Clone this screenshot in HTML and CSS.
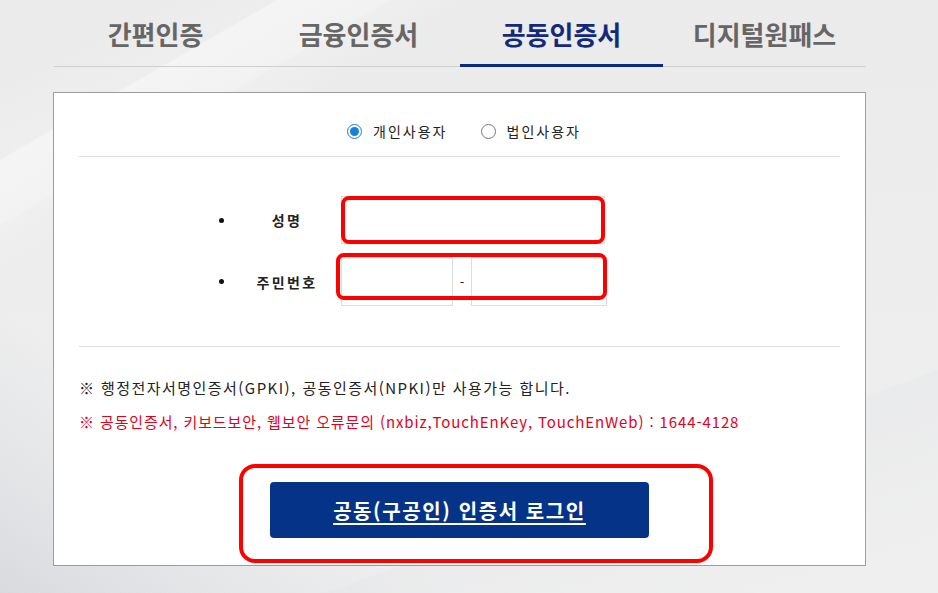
FILE: index.html
```html
<!DOCTYPE html>
<html lang="ko">
<head>
    <meta charset="UTF-8">
    <meta name="viewport" content="width=device-width, initial-scale=1.0">
    <title>공동인증서 로그인</title>
    <link rel="stylesheet" href="styles.css">
</head>
<body>
    <div class="login-wrap">
        <ul class="login-tabs">
            <li class="tab">간편인증</li>
            <li class="tab">금융인증서</li>
            <li class="tab active">공동인증서</li>
            <li class="tab">디지털원패스</li>
        </ul>

        <div class="login-box">
            <div class="user-type">
                <label class="radio-item">
                    <input type="radio" name="userType" checked>
                    <span>개인사용자</span>
                </label>
                <label class="radio-item">
                    <input type="radio" name="userType">
                    <span>법인사용자</span>
                </label>
            </div>

            <div class="user-form">
                <div class="form-row">
                    <span class="bullet"></span>
                    <span class="form-label">성명</span>
                    <div class="input-group mark name-group">
                        <input type="text" class="text-input name-input">
                    </div>
                </div>
                <div class="form-row">
                    <span class="bullet"></span>
                    <span class="form-label">주민번호</span>
                    <div class="input-group mark ssn-group">
                        <input type="text" class="text-input ssn-front">
                        <span class="dash">-</span>
                        <input type="password" class="text-input ssn-back">
                    </div>
                </div>
            </div>

            <div class="notice">
                <p class="notice-text">※ 행정전자서명인증서(GPKI), 공동인증서(NPKI)만 사용가능 합니다.</p>
                <p class="notice-text warn">※ 공동인증서, 키보드보안, 웹보안 오류문의 (nxbiz,TouchEnKey, TouchEnWeb) : 1644-4128</p>
            </div>

            <div class="btn-area">
                <div class="btn-mark">
                    <button type="button" class="login-btn">공동(구공인) 인증서 로그인</button>
                </div>
            </div>
        </div>
    </div>
</body>
</html>
```

FILE: styles.css
```css
body {
    margin: 0;
    padding: 0;
    min-height: 593px;
    font-family: "Noto Sans CJK KR", "Noto Sans", sans-serif;
    color: #222;
    background-color: #ededee;
    background-image:
        linear-gradient(150deg, rgba(255, 255, 255, 0) 0%, rgba(255, 255, 255, 0) 14%, rgba(246, 246, 247, 0.8) 14.2%, rgba(240, 240, 241, 0) 24%),
        linear-gradient(32deg, rgba(212, 215, 219, 0.85) 0%, rgba(222, 224, 227, 0.6) 12%, rgba(237, 237, 238, 0) 24%),
        linear-gradient(-30deg, rgba(255, 255, 255, 0) 80%, rgba(244, 244, 245, 0.5) 80.3%, rgba(238, 238, 239, 0) 92%),
        linear-gradient(160deg, rgba(255, 255, 255, 0) 76%, rgba(225, 227, 230, 0.3) 76.3%, rgba(238, 238, 239, 0) 94%),
        linear-gradient(180deg, #ebebec 0%, #efefef 100%);
}

.login-wrap {
    width: 812px;
    margin-left: 54px;
}

/* tabs */
.login-tabs {
    list-style: none;
    margin: 0;
    padding: 0;
    display: flex;
    border-bottom: 1px solid #cfcfcf;
}

.tab {
    flex: 1;
    height: 66px;
    box-sizing: border-box;
    padding-top: 15px;
    text-align: center;
    font-size: 26px;
    font-weight: bold;
    line-height: 38px;
    color: #666;
}

.tab.active {
    color: #132a7a;
    border-bottom: 3px solid #0b2a7f;
    margin-bottom: -1px;
    height: 67px;
}

.tab:nth-child(3) {
    flex: 0 0 203px;
}

/* box */
.login-box {
    margin-top: 25px;
    margin-left: -1px;
    height: 474px;
    box-sizing: border-box;
    background: #fff;
    border: 1px solid #9d9d9d;
    padding: 0 25px;
}

.user-type {
    display: flex;
    justify-content: center;
    gap: 33px;
    padding: 27px 0 14px 9px;
    border-bottom: 1px solid #ddd;
    font-size: 14px;
    line-height: 22px;
}

.radio-item {
    display: flex;
    align-items: center;
    gap: 11px;
    color: #222;
    letter-spacing: 2px;
}

.radio-item input {
    width: 15px;
    height: 15px;
    margin: 0;
    accent-color: #1a7fd6;
}

/* form */
.user-form {
    padding: 39px 0 40px;
    border-bottom: 1px solid #ddd;
}

.form-row {
    display: flex;
    align-items: center;
    padding-left: 140px;
}

.form-row + .form-row {
    margin-top: 13px;
}

.bullet {
    width: 5px;
    height: 5px;
    border-radius: 50%;
    background: #111;
}

.form-label {
    width: 90px;
    margin-left: 18px;
    text-align: center;
    font-size: 14px;
    font-weight: bold;
    color: #222;
    letter-spacing: 2.4px;
}

.input-group {
    margin-left: 9px;
    display: flex;
    align-items: stretch;
    position: relative;
}

.name-group {
    width: 264px;
    height: 48px;
}

.ssn-group {
    width: 266px;
    height: 49px;
}

.text-input {
    box-sizing: border-box;
    border: 1px solid #dcdcdc;
    background: #fff;
    margin: 0;
    padding: 0 8px;
    font-size: 14px;
}

.name-input {
    width: 100%;
}

.ssn-front {
    width: 112px;
}

.ssn-back {
    width: 136px;
}

.dash {
    width: 18px;
    text-align: center;
    font-size: 13px;
    line-height: 49px;
}

/* red marking boxes */
.mark::after {
    content: "";
    position: absolute;
    border: 4px solid #ff0000;
    border-radius: 8px;
    pointer-events: none;
}

.name-group::after {
    inset: 0;
}

.ssn-group::after {
    inset: -4px 0 6px -5px;
}

/* notice */
.notice {
    padding-top: 24px;
}

.notice-text {
    margin: 0;
    font-size: 15px;
    line-height: 34px;
    color: #222;
    letter-spacing: 1.45px;
}

.notice-text.warn {
    color: #e4001d;
    letter-spacing: 0.88px;
}

/* button */
.btn-area {
    display: flex;
    justify-content: center;
    margin-top: 43px;
}

.btn-mark {
    position: relative;
}

.btn-mark::after {
    content: "";
    position: absolute;
    inset: -18px -64px -25px -31px;
    border: 4px solid #ff0000;
    border-radius: 16px;
    pointer-events: none;
}

.login-btn {
    width: 379px;
    height: 56px;
    border: none;
    border-radius: 4px;
    background: #053387;
    color: #fff;
    font-family: "Noto Sans CJK KR", "Noto Sans", sans-serif;
    font-size: 20px;
    font-weight: bold;
    letter-spacing: 1.6px;
    text-decoration: underline;
    text-underline-offset: 4px;
    cursor: pointer;
}
```
